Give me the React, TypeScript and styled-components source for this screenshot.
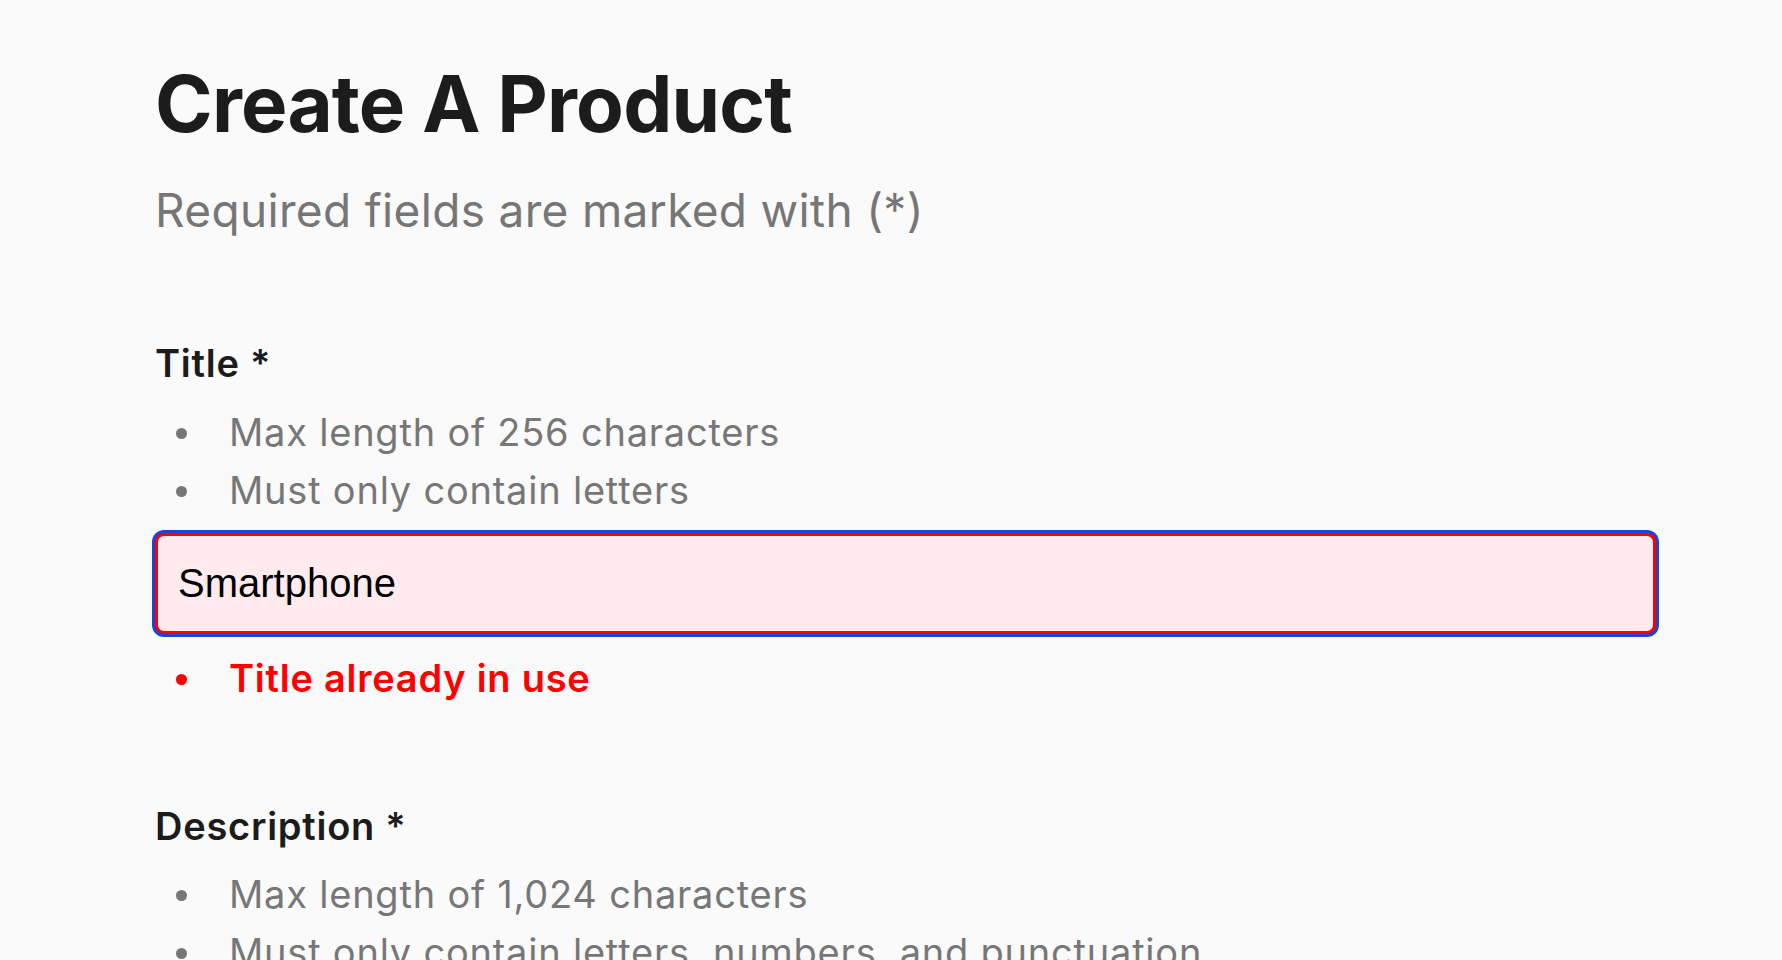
import React from "react";
import styled, { createGlobalStyle } from "styled-components";

const GlobalStyle = createGlobalStyle`
  html, body {
    margin: 0;
    padding: 0;
    background: #fafafa;
  }
  body {
    font-family: Inter, "Noto Sans", sans-serif;
    color: #1c1c1c;
  }
  * { box-sizing: border-box; }
`;

const Page = styled.main`
  min-height: 960px;
  padding: 57px 126px 0 155px;
  background: #fafafa;
`;

const Heading = styled.h1`
  margin: 0;
  font-family: Inter, sans-serif;
  font-size: 78px;
  line-height: 94px;
  font-weight: 700;
  letter-spacing: -0.8px;
  color: #1c1c1c;
`;

const Subtitle = styled.p`
  margin: 31px 0 0;
  font-family: Inter, sans-serif;
  font-size: 46px;
  line-height: 56px;
  font-weight: 400;
  letter-spacing: 0.33px;
  color: #767676;
`;

const Field = styled.section<{ $first?: boolean }>`
  margin-top: ${(p) => (p.$first ? "103px" : "97px")};
  display: flex;
  flex-direction: column;
`;

const Label = styled.label`
  font-family: Inter, sans-serif;
  font-size: 38px;
  line-height: 45px;
  font-weight: 600;
  letter-spacing: 0.75px;
  color: #1c1c1c;
`;

const RuleList = styled.ul<{ $gap: number }>`
  list-style: none;
  margin: ${(p) => p.$gap}px 0 0;
  padding: 0;
`;

const Rule = styled.li<{ $error?: boolean }>`
  display: flex;
  align-items: center;
  font-family: Inter, sans-serif;
  font-size: 38px;
  line-height: 58px;
  font-weight: ${(p) => (p.$error ? 600 : 400)};
  letter-spacing: ${(p) => (p.$error ? "0.75px" : "0.78px")};
  color: ${(p) => (p.$error ? "#ff0000" : "#777777")};

  &::before {
    content: "";
    flex: none;
    width: 11px;
    height: 11px;
    margin: 3px 42px 0 21px;
    border-radius: 50%;
    background: ${(p) => (p.$error ? "#ff0000" : "#777777")};
  }
`;

const TextInput = styled.input`
  display: block;
  width: 100%;
  height: 101px;
  margin-top: 14px;
  padding: 0 20px;
  border: 3px solid #ff0000;
  border-radius: 9px;
  background: #ffebee;
  box-shadow: 0 0 0 3px #1846d2;
  outline: none;
  font-family: "Liberation Sans", Arial, sans-serif;
  font-size: 40px;
  color: #000000;
`;

export default function App() {
  return (
    <>
      <GlobalStyle />
      <Page>
        <Heading>Create A Product</Heading>
        <Subtitle>Required fields are marked with (*)</Subtitle>

        <Field $first>
          <Label htmlFor="title">Title *</Label>
          <RuleList $gap={17}>
            <Rule>Max length of 256 characters</Rule>
            <Rule>Must only contain letters</Rule>
          </RuleList>
          <TextInput id="title" defaultValue="Smartphone" />
          <RuleList $gap={15}>
            <Rule $error>Title already in use</Rule>
          </RuleList>
        </Field>

        <Field>
          <Label htmlFor="description">Description *</Label>
          <RuleList $gap={16}>
            <Rule>Max length of 1,024 characters</Rule>
            <Rule>Must only contain letters, numbers, and punctuation</Rule>
          </RuleList>
        </Field>
      </Page>
    </>
  );
}
